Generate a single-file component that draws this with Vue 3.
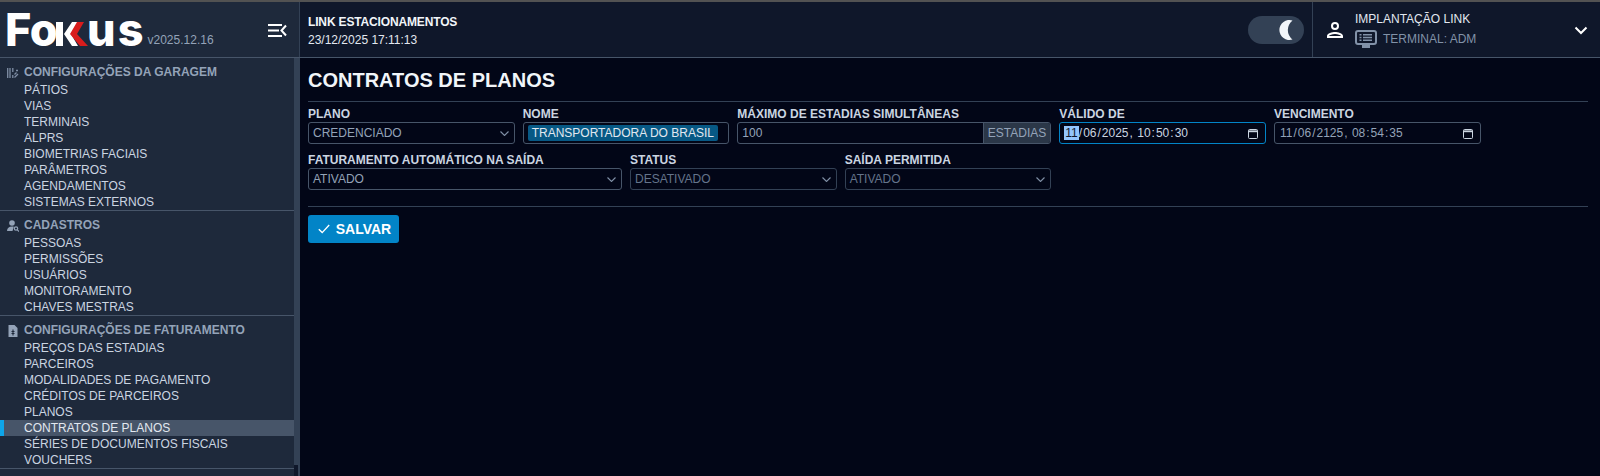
<script setup>
const groups = [
  { title: 'CONFIGURAÇÕES DA GARAGEM', icon: 'a', items: ['PÁTIOS', 'VIAS', 'TERMINAIS', 'ALPRS', 'BIOMETRIAS FACIAIS', 'PARÂMETROS', 'AGENDAMENTOS', 'SISTEMAS EXTERNOS'] },
  { title: 'CADASTROS', icon: 'b', items: ['PESSOAS', 'PERMISSÕES', 'USUÁRIOS', 'MONITORAMENTO', 'CHAVES MESTRAS'] },
  { title: 'CONFIGURAÇÕES DE FATURAMENTO', icon: 'c', items: ['PREÇOS DAS ESTADIAS', 'PARCEIROS', 'MODALIDADES DE PAGAMENTO', 'CRÉDITOS DE PARCEIROS', 'PLANOS', 'CONTRATOS DE PLANOS', 'SÉRIES DE DOCUMENTOS FISCAIS', 'VOUCHERS'] },
]
</script>

<template>
  <div class="page">
    <div class="topline"></div>
    <header class="top">
      <div class="brand">
        <div class="logo" aria-label="Fokus">
          <span class="logo-t fo">Fo</span>
          <svg class="chev" width="32" height="24" viewBox="0 0 32 24">
            <rect x="0" y="0" width="7" height="24" fill="#fff"/>
            <path d="M16 0h6L15 12l7 12h-6L8 12z" fill="#fff"/>
            <path d="M21 0h7L21 12l11 12h-8L14 12z" fill="#d91c1c"/>
          </svg>
          <span class="logo-t u">us</span>
        </div>
        <span class="ver">v2025.12.16</span>
        <svg class="burger" width="19" height="13" viewBox="0 0 19 13" fill="none" stroke="#fff" stroke-width="2">
          <path d="M0 1h14M0 6.500h11M0 12h14M18 1.500L13.500 6.500L18 11.500"/>
        </svg>
      </div>
      <div class="head-main">
        <div class="org">LINK ESTACIONAMENTOS</div>
        <div class="stamp">23/12/2025 17:11:13</div>
      </div>
      <div class="toggle">
        <svg width="16" height="20" viewBox="0 0 16 20"><path d="M14.500 .5A10 10 0 1 0 14.500 19.500A12 12 0 0 1 14.500 .5z" fill="#f1f5f9"/></svg>
      </div>
      <div class="user">
        <svg class="person" width="24" height="24" viewBox="0 0 24 24" fill="#fff"><path d="M12 4a4 4 0 1 1 0 8a4 4 0 0 1 0-8zm0 2a2 2 0 1 0 0 4a2 2 0 0 0 0-4zm0 8c2.700 0 8 1.300 8 4v2H4v-2c0-2.700 5.300-4 8-4zm0 2c-2.900 0-5.600 1.200-6 2h12c-.4-.8-3.100-2-6-2z"/></svg>
        <div class="user-text">
          <div class="u1">IMPLANTAÇÃO LINK</div>
          <div class="u2">
            <svg width="22" height="18" viewBox="0 0 22 18" fill="none" stroke="#8292a8" stroke-width="2">
              <rect x="1" y="1" width="20" height="13" rx="2"/>
              <path d="M4.500 4.800h2M8 4.800h9M4.500 7.500h2M8 7.500h9M4.500 10.200h2M8 10.200h9" stroke-width="1.500"/>
              <path d="M7 16.500h8" stroke-width="3"/>
            </svg>
            <span>TERMINAL: ADM</span>
          </div>
        </div>
        <svg class="caret" width="14" height="9" viewBox="0 0 14 9" fill="none" stroke="#fff" stroke-width="2"><path d="M1.500 1.500L7 7l5.500-5.500"/></svg>
      </div>
    </header>
    <div class="body">
      <aside class="side">
        <nav class="menu">
          <section v-for="g in groups" :key="g.title" class="grp">
            <div class="grp-title">
              <svg v-if="g.icon === 'a'" class="gi" width="12" height="12" viewBox="0 0 12 12" fill="none" stroke="#7f8ea5" stroke-width="1.300"><path d="M.7 1v10M3 1v10M5.800 1v4M5.800 8v3M7.500 10.500l3.500-3.500M7.500 7.500l2-2M9 3.500h2"/></svg>
              <svg v-else-if="g.icon === 'b'" class="gi" width="12" height="12" viewBox="0 0 12 12" fill="#94a3b8"><circle cx="5" cy="3" r="2.800"/><path d="M0 11c0-3 2-4.500 5-4.500c.7 0 1.300.1 1.800.3L5.500 11z"/><circle cx="9" cy="8.500" r="1.700" fill="none" stroke="#94a3b8" stroke-width="1.200"/><path d="M10.200 9.700L12 11.500" stroke="#94a3b8" stroke-width="1.200"/></svg>
              <svg v-else class="gi" width="12" height="12" viewBox="0 0 12 12" fill="#94a3b8"><path d="M1.500 0h6l3 3v9h-9z"/><path d="M6 4.500v6M4.500 6.500h3M4.500 8.500h3" stroke="#1e293b" stroke-width="1.100" fill="none"/></svg>
              <span>{{ g.title }}</span>
            </div>
            <a v-for="it in g.items" :key="it" class="item" :class="{ on: it === 'CONTRATOS DE PLANOS' }">{{ it }}</a>
          </section>
        </nav>
        <div class="track"><div class="thumb"></div></div>
      </aside>
      <main class="main">
        <h1>CONTRATOS DE PLANOS</h1>
        <div class="row r1">
          <label class="f c2"><span class="l">PLANO</span><div class="box sel">CREDENCIADO<svg class="dn" width="9" height="5" viewBox="0 0 9 5" fill="none" stroke="#8090a6" stroke-width="1.100"><path d="M.5.5L4.500 4.500L8.500.5"/></svg></div></label>
          <label class="f c2"><span class="l">NOME</span><div class="box name"><span class="hl">TRANSPORTADORA DO BRASIL</span></div></label>
          <label class="f c3"><span class="l">MÁXIMO DE ESTADIAS SIMULTÂNEAS</span><div class="box grp-in"><span class="val">100</span><span class="add">ESTADIAS</span></div></label>
          <label class="f c2"><span class="l">VÁLIDO DE</span><div class="box focus dt"><span><span class="seg hd">11</span>/<span class="seg">06</span>/<span class="seg">2025</span>, <span class="seg">10</span>:<span class="seg">50</span>:<span class="seg">30</span></span><svg class="cal" width="10" height="11" viewBox="0 0 10 11" fill="none" stroke="#cbd5e1" stroke-width="1"><rect x=".5" y="1.500" width="9" height="9" rx="1"/><path d="M.5 3.300h9" stroke-width="1.800"/></svg></div></label>
          <label class="f c2"><span class="l">VENCIMENTO</span><div class="box dt muted"><span><span class="seg">11</span>/<span class="seg">06</span>/<span class="seg">2125</span>, <span class="seg">08</span>:<span class="seg">54</span>:<span class="seg">35</span></span><svg class="cal" width="10" height="11" viewBox="0 0 10 11" fill="none" stroke="#cbd5e1" stroke-width="1"><rect x=".5" y="1.500" width="9" height="9" rx="1"/><path d="M.5 3.300h9" stroke-width="1.800"/></svg></div></label>
        </div>
        <div class="row r2">
          <label class="f c3"><span class="l">FATURAMENTO AUTOMÁTICO NA SAÍDA</span><div class="box sel">ATIVADO<svg class="dn" width="9" height="5" viewBox="0 0 9 5" fill="none" stroke="#8090a6" stroke-width="1.100"><path d="M.5.5L4.500 4.500L8.500.5"/></svg></div></label>
          <label class="f c2"><span class="l">STATUS</span><div class="box sel dim">DESATIVADO<svg class="dn" width="9" height="5" viewBox="0 0 9 5" fill="none" stroke="#8090a6" stroke-width="1.100"><path d="M.5.5L4.500 4.500L8.500.5"/></svg></div></label>
          <label class="f c2"><span class="l">SAÍDA PERMITIDA</span><div class="box sel dim">ATIVADO<svg class="dn" width="9" height="5" viewBox="0 0 9 5" fill="none" stroke="#8090a6" stroke-width="1.100"><path d="M.5.5L4.500 4.500L8.500.5"/></svg></div></label>
        </div>
        <hr />
        <button class="save"><svg width="12" height="10" viewBox="0 0 12 10" fill="none" stroke="#fff" stroke-width="1.400"><path d="M.8 5.200L4.200 8.600L11.200 1"/></svg>SALVAR</button>
      </main>
    </div>
  </div>
</template>

<style>
html, body { margin: 0; background: #020617; }
</style>

<style scoped>
.page { width: 1600px; height: 476px; overflow: hidden; display: flex; flex-direction: column; background: #020617; font-family: "Liberation Sans", Arial, sans-serif; font-size: 12px; color: #cbd5e1; }
.topline { height: 2px; background: #525252; flex: none; }
.top { height: 55px; flex: none; display: flex; align-items: stretch; background: #0f172a; border-bottom: 1px solid #475569; }
.brand { width: 299px; flex: none; background: #1e293b; border-right: 1px solid #334155; position: relative; display: flex; align-items: flex-end; }
.logo { margin-left: 5px; margin-bottom: 11px; height: 33px; display: flex; align-items: flex-end; color: #fff; }
.logo-t { font-family: Inter, sans-serif; font-weight: 800; font-size: 45px; line-height: 33px; height: 33px; }
.fo { letter-spacing: -.5px; }
.chev { margin: 0 0 0 -1px; flex: none; }
.u { margin-left: -1px; letter-spacing: 2px; }
.ver { margin: 0 0 10px 2px; color: #94a3b8; font-size: 12px; line-height: 14px; }
.burger { position: absolute; left: 268px; top: 22px; }
.head-main { flex: 1; padding: 12px 0 0 8px; }
.org { font-weight: 700; font-size: 12px; letter-spacing: -.15px; line-height: 16px; color: #f1f5f9; }
.stamp { font-size: 12px; line-height: 16px; margin-top: 2px; color: #e2e8f0; }
.toggle { width: 56px; height: 28px; margin: 14px 8px 0 0; border-radius: 14px; background: #334155; display: flex; align-items: center; justify-content: flex-end; padding-right: 10px; box-sizing: border-box; }
.user { width: 288px; flex: none; border-left: 1px solid #334155; display: flex; align-items: center; position: relative; padding-left: 10px; box-sizing: border-box; }
.person { margin-right: 8px; }
.u1 { font-size: 12px; line-height: 16px; color: #e2e8f0; }
.u2 { display: flex; align-items: center; gap: 6px; color: #8292a8; font-size: 12px; margin-top: 3px; }
.caret { position: absolute; left: 261px; top: 24px; }
.body { flex: 1; min-height: 0; display: flex; }
.side { width: 300px; flex: none; display: flex; background: #1e293b; border-right: 2px solid #334155; box-sizing: border-box; }
.menu { width: 294px; flex: none; }
.track { width: 4px; background: #0f172a; }
.thumb { height: 407px; background: #334155; }
.grp { border-bottom: 1px solid #475569; padding: 5px 0 0; }
.grp-title { height: 19px; line-height: 19px; display: flex; align-items: center; font-weight: 700; color: #94a3b8; padding-left: 7px; gap: 5px; }
.gi { flex: none; }
.item { display: block; height: 16px; line-height: 16px; padding-left: 24px; color: #cbd5e1; }
.item.on { background: #475569; border-left: 4px solid #0ea5e9; padding-left: 20px; color: #e2e8f0; }
.main { flex: 1; padding: 0 12px 0 8px; min-width: 0; }
h1 { margin: 0; padding: 10px 0 9px; font-size: 20px; line-height: 24px; font-weight: 700; color: #f1f5f9; border-bottom: 1px solid #334155; }
.row { display: grid; grid-template-columns: repeat(12, 1fr); column-gap: 8px; }
.r1 { margin-top: 4px; }
.r2 { margin-top: 8px; }
.f { display: block; min-width: 0; }
.c2 { grid-column: span 2; }
.c3 { grid-column: span 3; }
.l { display: block; font-weight: 700; font-size: 12px; line-height: 16px; color: #cbd5e1; }
.box { height: 22px; box-sizing: border-box; border: 1px solid #475569; border-radius: 3px; display: flex; align-items: center; padding: 0 4px; color: #94a3b8; position: relative; white-space: nowrap; }
.sel .dn { position: absolute; right: 5px; top: 8px; }
.dim { color: #64748b; border-color: #334155; }
.name { color: #e2e8f0; }
.hl { background: #075985; border-radius: 2px; padding: 0 4px; line-height: 16px; height: 16px; }
.grp-in { padding: 0; overflow: hidden; }
.val { flex: 1; padding-left: 4px; }
.add { height: 100%; display: flex; align-items: center; padding: 0 4px; background: #2b3748; border-left: 1px solid #475569; }
.dt { justify-content: space-between; }
.seg { padding: 0 1px; }
.focus { border-color: #0284c7; color: #cbd5e1; }
.hd { background: #93c5fd; color: #0f172a; }
.cal { margin-right: 3px; }
hr { border: 0; border-top: 1px solid #334155; margin: 16px 0 8px; }
.save { height: 28px; width: 91px; border: 0; border-radius: 3px; background: #0284c7; color: #fff; font: 700 14px "Liberation Sans", sans-serif; display: flex; align-items: center; justify-content: center; gap: 6px; padding: 0 0 0 2px; }
</style>
